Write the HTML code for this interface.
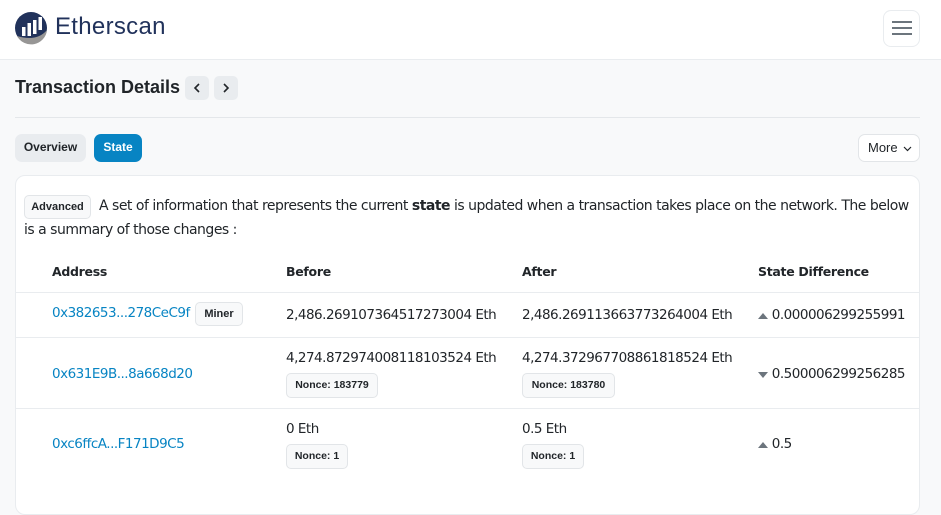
<!DOCTYPE html>
<html><head><meta charset="utf-8"><style>
*{box-sizing:border-box;margin:0;padding:0}
body{width:941px;height:497px;overflow:hidden;background:#f8f9fa;font-family:"DejaVu Sans","Liberation Sans",sans-serif;color:#212529;position:relative}
.a{position:absolute;white-space:nowrap}
.hdr{position:absolute;left:0;top:0;width:941px;height:60px;background:#fff;border-bottom:1px solid #e9ecef}
.badge{position:absolute;background:#f8f9fa;border:1px solid #e2e5e8;border-radius:5px;font-size:11px;font-weight:bold;color:#212529;text-align:center;font-family:"Liberation Sans",sans-serif}
.card{position:absolute;left:15px;top:175px;width:905px;height:340px;background:#fff;border:1px solid #e9ecef;border-radius:10px}
.line{position:absolute;left:16px;width:903px;height:1px;background:#e9ecef}
.t{font-size:13.5px;letter-spacing:-0.5px}
.lk{color:#0784c3}
.th{font-size:12.5px;font-weight:bold;letter-spacing:-0.3px}
</style></head><body>
<div class="hdr"></div>
<svg class="a" style="left:14px;top:11px" width="34" height="34" viewBox="0 0 34 34">
<circle cx="17" cy="17" r="16" fill="#21325b"/>
<path d="M3 25 A16 16 0 0 0 33 19 Q23 31 3 25Z" fill="#979695"/>
<rect x="8" y="16" width="3.5" height="9" fill="#fff"/><rect x="13.5" y="12" width="3.5" height="13" fill="#fff"/><rect x="19" y="9" width="3.5" height="14" fill="#fff"/><rect x="24.5" y="6" width="3.5" height="13" fill="#fff"/>
</svg>
<div class="a" style="left:55px;top:13px;font-size:24px;color:#21325b;font-family:'Liberation Sans',sans-serif;letter-spacing:0.3px">Etherscan</div>
<div class="a" style="left:883px;top:10px;width:37px;height:37px;border:1px solid #e9ecef;border-radius:8px;background:#fff"></div>
<div class="a" style="left:892px;top:21px;width:20px;height:2px;background:#6c757d;box-shadow:0 6px 0 #6c757d,0 12px 0 #6c757d"></div>
<div class="a" style="left:15px;top:77px;font-size:18px;font-weight:bold;font-family:'Liberation Sans',sans-serif;color:#212529">Transaction Details</div>
<div class="a" style="left:185px;top:76px;width:24px;height:24px;background:#e9ecef;border-radius:5px"><svg width="24" height="24" viewBox="0 0 24 24"><path d="M14 8L10 12L14 16" stroke="#212529" stroke-width="1.6" fill="none"/></svg></div>
<div class="a" style="left:214px;top:76px;width:24px;height:24px;background:#e9ecef;border-radius:5px"><svg width="24" height="24" viewBox="0 0 24 24"><path d="M10 8L14 12L10 16" stroke="#212529" stroke-width="1.6" fill="none"/></svg></div>
<div class="a" style="left:15px;top:117px;width:905px;height:1px;background:#e4e7ea"></div>
<div class="a" style="left:15px;top:134px;width:71px;height:28px;background:#e9ecef;border-radius:7px;font-size:12px;font-weight:bold;font-family:'Liberation Sans',sans-serif;text-align:center;line-height:27px">Overview</div>
<div class="a" style="left:94px;top:134px;width:48px;height:28px;background:#0784c3;border-radius:7px;font-size:12px;font-weight:bold;color:#fff;font-family:'Liberation Sans',sans-serif;text-align:center;line-height:27px">State</div>
<div class="a" style="left:858px;top:134px;width:62px;height:28px;background:#fff;border:1px solid #e2e5e8;border-radius:7px;font-size:13px;font-family:'Liberation Sans',sans-serif;line-height:26px;padding-left:9px">More <svg width="9" height="6" viewBox="0 0 9 6" style="margin-left:2px"><path d="M1 1L4.5 4.5L8 1" stroke="#212529" stroke-width="1.2" fill="none"/></svg></div>
<div class="card"></div>
<div class="badge" style="left:24px;top:195px;width:67px;height:24px;line-height:22px">Advanced</div>
<div class="a" style="left:99px;top:198px;font-size:14px;letter-spacing:-0.5px">A set of information that represents the current <b>state</b> is updated when a transaction takes place on the network. The below</div>
<div class="a" style="left:24px;top:222px;font-size:14px;letter-spacing:-0.5px">is a summary of those changes :</div>
<div class="a th" style="left:52px;top:264px">Address</div>
<div class="a th" style="left:286px;top:264px">Before</div>
<div class="a th" style="left:522px;top:264px">After</div>
<div class="a th" style="left:758px;top:264px">State Difference</div>
<div class="line" style="top:292px"></div>
<div class="line" style="top:337px"></div>
<div class="line" style="top:408px"></div>
<div class="a t lk" style="left:52px;top:305px">0x382653...278CeC9f</div>
<div class="badge" style="left:195px;top:302px;width:48px;height:24px;line-height:22px">Miner</div>
<div class="a t" style="left:286px;top:307px">2,486.269107364517273004 Eth</div>
<div class="a t" style="left:522px;top:307px">2,486.269113663773264004 Eth</div>
<div class="a t" style="left:758px;top:307px"><svg width="10" height="6" viewBox="0 0 10 6"><path d="M0 6L5 0L10 6Z" fill="#6c757d"/></svg> 0.000006299255991</div>
<div class="a t lk" style="left:52px;top:366px">0x631E9B...8a668d20</div>
<div class="a t" style="left:286px;top:350px">4,274.872974008118103524 Eth</div>
<div class="badge" style="left:286px;top:373px;width:92px;height:25px;line-height:23px;font-size:10.5px">Nonce: 183779</div>
<div class="a t" style="left:522px;top:350px">4,274.372967708861818524 Eth</div>
<div class="badge" style="left:522px;top:373px;width:93px;height:25px;line-height:23px;font-size:10.5px">Nonce: 183780</div>
<div class="a t" style="left:758px;top:366px"><svg width="10" height="6" viewBox="0 0 10 6"><path d="M0 0L5 6L10 0Z" fill="#6c757d"/></svg> 0.500006299256285</div>
<div class="a t lk" style="left:52px;top:436px">0xc6ffcA...F171D9C5</div>
<div class="a t" style="left:286px;top:421px">0 Eth</div>
<div class="badge" style="left:286px;top:444px;width:62px;height:25px;line-height:23px;font-size:10.5px">Nonce: 1</div>
<div class="a t" style="left:522px;top:421px">0.5 Eth</div>
<div class="badge" style="left:522px;top:444px;width:62px;height:25px;line-height:23px;font-size:10.5px">Nonce: 1</div>
<div class="a t" style="left:758px;top:436px"><svg width="10" height="6" viewBox="0 0 10 6"><path d="M0 6L5 0L10 6Z" fill="#6c757d"/></svg> 0.5</div>
</body></html>
